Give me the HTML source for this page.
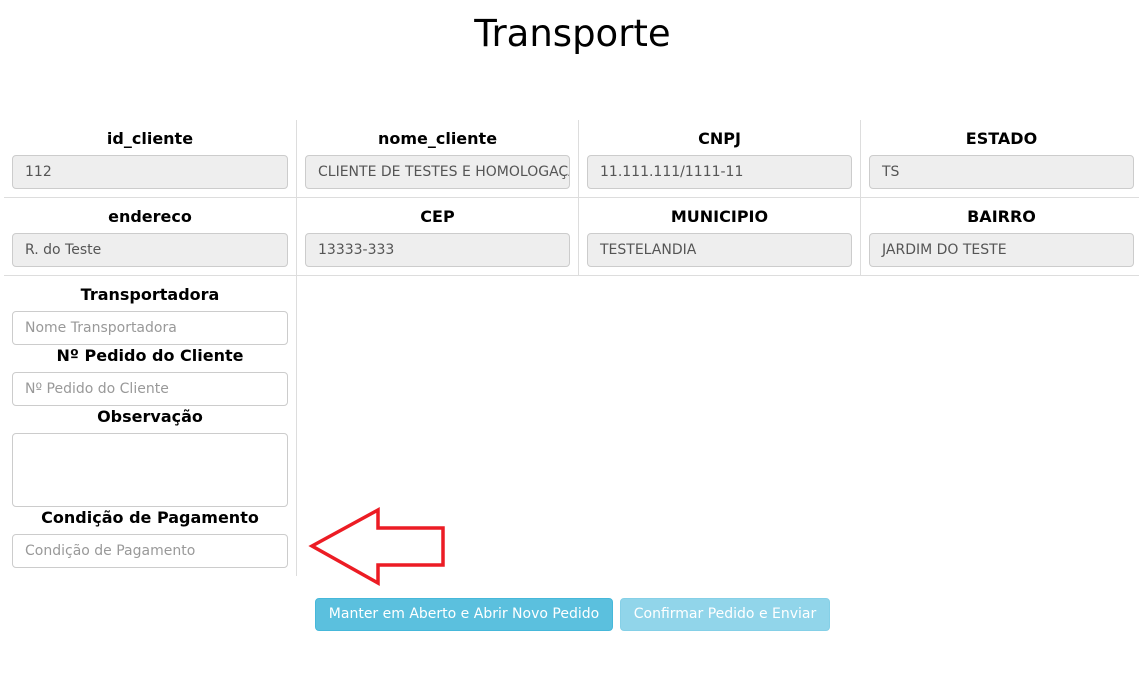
<!DOCTYPE html>
<html><head><meta charset="utf-8"><style>
body{margin:0;width:1139px;height:689px;background:#fff;position:relative;font-family:"DejaVu Sans","Liberation Sans",sans-serif;overflow:hidden}
.a{position:absolute}
.t{left:0;width:1145px;top:12px;text-align:center;font-size:37px;color:#000}
.l{position:absolute;font-weight:bold;font-size:16px;color:#000;text-align:center}
.i{position:absolute;height:32px;border:1px solid #ccc;border-radius:4px;box-sizing:border-box;height:34px;font-size:14px;color:#555;padding:0 12px;line-height:32px;white-space:nowrap;overflow:hidden}
.g{background:#eee}
.p{background:#fff;color:#999}
.hl{position:absolute;height:1px;background:#ddd}
.vl{position:absolute;width:1px;background:#ddd}
.b{position:absolute;top:598px;height:33px;border-radius:4px;color:#fff;font-size:14px;line-height:31px;text-align:center;box-sizing:border-box}
</style></head><body>
<div class="a t">Transporte</div>
<div class="hl" style="left:4px;width:1135px;top:197px"></div>
<div class="hl" style="left:4px;width:1135px;top:275px"></div>
<div class="vl" style="left:296px;top:120px;height:456px"></div>
<div class="vl" style="left:578px;top:120px;height:155px"></div>
<div class="vl" style="left:860px;top:120px;height:155px"></div>

<div class="l" style="left:4px;width:292px;top:129px">id_cliente</div>
<div class="l" style="left:297px;width:281px;top:129px">nome_cliente</div>
<div class="l" style="left:579px;width:281px;top:129px">CNPJ</div>
<div class="l" style="left:861px;width:281px;top:129px">ESTADO</div>
<div class="i g" style="left:12px;width:276px;top:155px">112</div>
<div class="i g" style="left:305px;width:265px;top:155px">CLIENTE DE TESTES E HOMOLOGAÇÃO</div>
<div class="i g" style="left:587px;width:265px;top:155px">11.111.111/1111-11</div>
<div class="i g" style="left:869px;width:265px;top:155px">TS</div>

<div class="l" style="left:4px;width:292px;top:207px">endereco</div>
<div class="l" style="left:297px;width:281px;top:207px">CEP</div>
<div class="l" style="left:579px;width:281px;top:207px">MUNICIPIO</div>
<div class="l" style="left:861px;width:281px;top:207px">BAIRRO</div>
<div class="i g" style="left:12px;width:276px;top:233px">R. do Teste</div>
<div class="i g" style="left:305px;width:265px;top:233px">13333-333</div>
<div class="i g" style="left:587px;width:265px;top:233px">TESTELANDIA</div>
<div class="i g" style="left:869px;width:265px;top:233px">JARDIM DO TESTE</div>

<div class="l" style="left:4px;width:292px;top:285px">Transportadora</div>
<div class="i p" style="left:12px;width:276px;top:311px">Nome Transportadora</div>
<div class="l" style="left:4px;width:292px;top:346px">Nº Pedido do Cliente</div>
<div class="i p" style="left:12px;width:276px;top:372px">Nº Pedido do Cliente</div>
<div class="l" style="left:4px;width:292px;top:407px">Observação</div>
<div class="i p" style="left:12px;width:276px;top:433px;height:74px"></div>
<div class="l" style="left:4px;width:292px;top:508px">Condição de Pagamento</div>
<div class="i p" style="left:12px;width:276px;top:534px">Condição de Pagamento</div>

<svg class="a" style="left:0;top:0" width="1139" height="689"><polygon points="312,546 378,510 378,528 443,528 443,565 378,565 378,583" fill="none" stroke="#ec1c24" stroke-width="3.5" stroke-linejoin="miter"/></svg>

<div class="b" style="left:315px;width:298px;background:#5bc0de;border:1px solid #46b8da">Manter em Aberto e Abrir Novo Pedido</div>
<div class="b" style="left:620px;width:210px;background:#91d5ea;border:1px solid #85d0e7">Confirmar Pedido e Enviar</div>
</body></html>
